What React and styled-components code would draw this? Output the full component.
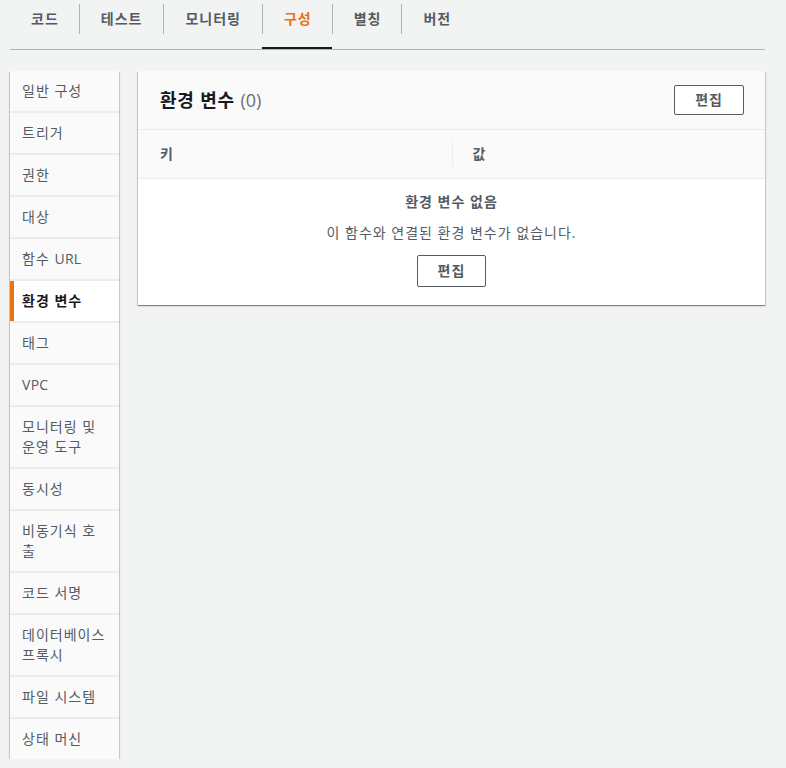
import styled, { createGlobalStyle } from "styled-components";

const GlobalStyle = createGlobalStyle`
  html, body {
    margin: 0;
    padding: 0;
    background: #f2f3f3;
  }
  body {
    font-family: "Open Sans", "Noto Sans CJK KR", sans-serif;
    font-size: 14px;
    letter-spacing: 1px;
    color: #16191f;
  }
`;

const Page = styled.div`
  padding: 0 21px 0 10px;
`;

const TabList = styled.div`
  display: flex;
  border-bottom: 1px solid #aab7b8;
`;

const Tab = styled.div`
  padding: 4px 0 13px;
  border-bottom: 2px solid ${({ active }) => (active ? "#16191f" : "transparent")};
  color: ${({ active }) => (active ? "#ec7211" : "#545b64")};
  font-weight: 700;
  cursor: pointer;
`;

const TabLabel = styled.span`
  display: block;
  line-height: 30px;
  padding: 0 ${({ wide }) => (wide ? "21px" : "20px")} 0 21px;
  border-left: 1px solid ${({ first }) => (first ? "transparent" : "#aab7b8")};
  margin-left: ${({ first }) => (first ? "-1px" : "0")};
`;

const Layout = styled.div`
  display: flex;
  align-items: flex-start;
  gap: 19px;
  padding-top: 21px;
`;

const Nav = styled.nav`
  width: 109px;
  flex-shrink: 0;
  display: flex;
  flex-direction: column;
  gap: 2px;
  background: #eaeded;
  box-shadow: 0 1px 1px 0 rgba(0, 28, 36, 0.3), 1px 1px 1px 0 rgba(0, 28, 36, 0.15),
    -1px 1px 1px 0 rgba(0, 28, 36, 0.15);
`;

const NavItem = styled.div`
  padding: 10px 12px 10px ${({ active }) => (active ? "8px" : "12px")};
  border-left: ${({ active }) => (active ? "4px solid #ec7211" : "none")};
  background: ${({ active }) => (active ? "#ffffff" : "#fafafa")};
  color: ${({ active }) => (active ? "#16191f" : "#545b64")};
  font-weight: ${({ active }) => (active ? 700 : 400)};
  line-height: 20px;
`;

const Latin = styled.span`
  letter-spacing: 0.3px;
`;

const Card = styled.section`
  flex: 1;
  background: #ffffff;
  box-shadow: 0 1px 1px 0 rgba(0, 28, 36, 0.3), 1px 1px 1px 0 rgba(0, 28, 36, 0.15),
    -1px 1px 1px 0 rgba(0, 28, 36, 0.15);
`;

const CardHeader = styled.div`
  display: flex;
  align-items: center;
  justify-content: space-between;
  padding: 14px 21px 14px 22px;
  background: #fafafa;
  border-bottom: 1px solid #eaeded;
`;

const Title = styled.h2`
  margin: 0;
  font-size: 18px;
  line-height: 28px;
  font-weight: 700;
  letter-spacing: 0.8px;
  color: #16191f;
`;

const Counter = styled.span`
  font-weight: 400;
  letter-spacing: 0;
  color: #687078;
`;

const Button = styled.button`
  font-family: inherit;
  font-size: 14px;
  font-weight: 700;
  line-height: 20px;
  letter-spacing: 1px;
  color: #545b64;
  background: #ffffff;
  border: 1px solid #545b64;
  border-radius: 2px;
  padding: ${({ tall }) => (tall ? "5px 20px" : "4px 20px")};
  cursor: pointer;
`;

const TableHead = styled.div`
  display: grid;
  grid-template-columns: 1fr 1fr;
  background: #fafafa;
  border-bottom: 1px solid #eaeded;
  height: 48px;
  align-items: center;
`;

const HeadCell = styled.div`
  padding-left: ${({ first }) => (first ? "22px" : "20px")};
  font-weight: 700;
  color: #545b64;
  line-height: 24px;
  border-left: ${({ first }) => (first ? "none" : "1px solid #eaeded")};
`;

const Empty = styled.div`
  display: flex;
  flex-direction: column;
  align-items: center;
  padding: 13px 20px 18px;
  color: #545b64;
  text-align: center;
`;

const EmptyTitle = styled.div`
  font-weight: 700;
  line-height: 20px;
`;

const EmptyText = styled.p`
  margin: 11px 0 12px;
  line-height: 20px;
`;

const tabs = ["코드", "테스트", "모니터링", "구성", "별칭", "버전"];

const navItems = [
  "일반 구성",
  "트리거",
  "권한",
  "대상",
  ["함수 ", "URL"],
  "환경 변수",
  "태그",
  [null, "VPC"],
  "모니터링 및 운영 도구",
  "동시성",
  "비동기식 호출",
  "코드 서명",
  "데이터베이스 프록시",
  "파일 시스템",
  "상태 머신",
];

const App = () => {
  return (
    <>
      <GlobalStyle />
      <Page>
        <TabList>
          {tabs.map((t, i) => (
            <Tab key={t} active={t === "구성"}>
              <TabLabel first={i === 0} wide={t.length > 2}>
                {t}
              </TabLabel>
            </Tab>
          ))}
        </TabList>
        <Layout>
          <Nav>
            {navItems.map((n) =>
              Array.isArray(n) ? (
                <NavItem key={n.join("")}>
                  {n[0]}
                  <Latin>{n[1]}</Latin>
                </NavItem>
              ) : (
                <NavItem key={n} active={n === "환경 변수"}>
                  {n}
                </NavItem>
              )
            )}
          </Nav>
          <Card>
            <CardHeader>
              <Title>
                환경 변수 <Counter>(0)</Counter>
              </Title>
              <Button>편집</Button>
            </CardHeader>
            <TableHead>
              <HeadCell first>키</HeadCell>
              <HeadCell>값</HeadCell>
            </TableHead>
            <Empty>
              <EmptyTitle>환경 변수 없음</EmptyTitle>
              <EmptyText>이 함수와 연결된 환경 변수가 없습니다.</EmptyText>
              <Button tall>편집</Button>
            </Empty>
          </Card>
        </Layout>
      </Page>
    </>
  );
};

export default App;
